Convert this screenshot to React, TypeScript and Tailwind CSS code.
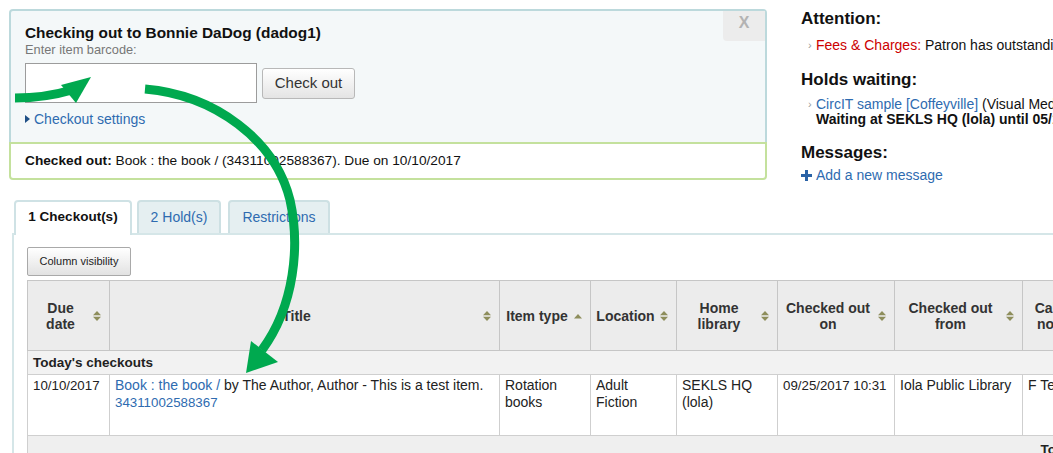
import React from "react";

function SortBoth() {
  return (
    <svg width="8" height="10" viewBox="0 0 8 10" className="shrink-0">
      <path d="M4 0 L8 4.2 H0 Z" fill="#8e8e5c" />
      <path d="M0 5.8 H8 L4 10 Z" fill="#8e8e5c" />
    </svg>
  );
}

function SortAsc() {
  return (
    <svg width="8" height="10" viewBox="0 0 8 10" className="shrink-0">
      <path d="M4 3 L8 7.5 H0 Z" fill="#8e8e5c" />
    </svg>
  );
}

function Th({ children, sort = "both" }: { children: React.ReactNode; sort?: "both" | "asc" }) {
  return (
    <th className="border border-[#c6c6c6] bg-[#ececec] pl-[4px] pr-[8px] align-middle text-[14px] font-bold leading-[16px] text-[#333]">
      <div className="flex items-center">
        <span className="flex-1 text-center">{children}</span>
        <span className="ml-[4px] flex">{sort === "both" ? <SortBoth /> : <SortAsc />}</span>
      </div>
    </th>
  );
}

function Td({ children, nowrap = false }: { children?: React.ReactNode; nowrap?: boolean }) {
  return (
    <td
      className={
        nowrap
          ? "whitespace-nowrap border border-[#cfcfcf] px-[5px] pt-[2px] align-top text-[14px] leading-[17px] text-[#222]"
          : "border border-[#cfcfcf] px-[5px] pt-[2px] align-top text-[14px] leading-[17px] text-[#222]"
      }
    >
      {children}
    </td>
  );
}

const LINK = "text-[#2e6bb0]";

export default function App() {
  return (
    <div className="relative h-[453px] w-[1053px] overflow-hidden bg-white font-['Liberation_Sans',Arial,sans-serif] text-[#222]">
      {/* top band */}
      <div className="flex h-[200px] items-start">
        {/* checkout panel */}
        <div className="ml-[9px] mt-[9px] w-[758px] shrink-0">
          <div className="relative rounded-t-[4px] border-2 border-b-0 border-[#bcd9dc] bg-[#f4f8f9] pb-[15px] pl-[14px] pt-[13px]">
            <div className="absolute right-0 top-0 flex h-[30px] w-[42px] justify-center rounded-bl-[4px] bg-[#ececec] pt-[4px] text-[16px] font-bold leading-[16px] text-[#b3b3b3]">
              X
            </div>
            <div className="text-[15.4px] font-bold leading-[17px] text-[#111]">
              Checking out to Bonnie DaDog (dadog1)
            </div>
            <div className="mt-[2px] text-[12.8px] leading-[14px] text-[#777]">Enter item barcode:</div>
            <div className="mt-[6px] flex items-center">
              <div className="h-[40px] w-[232px] border border-[#9c9c9c] bg-white" />
              <div className="ml-[5px] flex h-[31px] w-[93px] items-center justify-center rounded-[3px] border border-[#b8b8b8] bg-linear-to-b from-white to-[#e4e4e4] text-[15px] text-[#333]">
                Check out
              </div>
            </div>
            <div className={`mt-[8px] flex items-center text-[14px] leading-[16px] ${LINK}`}>
              <svg width="5" height="8" viewBox="0 0 5 8" className="mr-[4px]">
                <path d="M0 0 L5 4 L0 8 Z" fill="#1f4f86" />
              </svg>
              Checkout settings
            </div>
          </div>
          <div className="rounded-b-[4px] border-2 border-[#c4e19d] bg-white py-[9px] pl-[14px] text-[13.7px] leading-[16px] text-[#111]">
            <span className="font-bold">Checked out:</span> Book : the book / (34311002588367). Due on 10/10/2017
          </div>
        </div>

        {/* right column */}
        <div className="ml-[34px] mt-[9px] w-[400px] shrink-0 whitespace-nowrap text-[#111]">
          <div className="text-[17px] font-bold leading-[20px]">Attention:</div>
          <div className="ml-[7px] mt-[8px] flex items-center text-[14px] leading-[17px]">
            <span className="w-[8px] shrink-0 text-[11px] text-[#9a9a9a]">›</span>
            <span className="shrink-0 text-[#cc0000]">Fees &amp; Charges:</span>
            <span className="shrink-0">&nbsp;Patron has outstanding charges of 5.00.</span>
          </div>
          <div className="mt-[16px] text-[17px] font-bold leading-[20px]">Holds waiting:</div>
          <div className="ml-[7px] mt-[7px] text-[14px] leading-[15px]">
            <div className="flex items-center">
              <span className="w-[8px] shrink-0 text-[11px] text-[#9a9a9a]">›</span>
              <span className={`shrink-0 ${LINK}`}>CircIT sample [Coffeyville]</span>
              <span className="shrink-0">&nbsp;(Visual Media) Hold placed on 09/25/2017.</span>
            </div>
            <div className="ml-[8px] font-bold">Waiting at SEKLS HQ (lola) until 05/10/2017</div>
          </div>
          <div className="mt-[16px] text-[17px] font-bold leading-[20px]">Messages:</div>
          <div className={`mt-[4px] flex items-center text-[14px] leading-[17px] ${LINK}`}>
            <svg width="11" height="11" viewBox="0 0 11 11" className="mr-[4px]">
              <rect x="4" y="0" width="3" height="11" fill="#2a62a6" />
              <rect x="0" y="4" width="11" height="3" fill="#2a62a6" />
            </svg>
            Add a new message
          </div>
        </div>
      </div>

      {/* tabs */}
      <div className="ml-[12px] w-[1150px]">
        <div className="relative z-[1] -mb-[2px] flex h-[35px] items-start pl-[2px]">
          <div className="flex h-[35px] w-[118px] items-center justify-center rounded-t-[4px] border-2 border-b-0 border-[#cfe2e5] bg-white pb-[2px] text-[13.5px] font-bold text-[#111]">
            1 Checkout(s)
          </div>
          <div className={`ml-[5px] flex h-[33px] w-[84px] items-center justify-center rounded-t-[4px] border-2 border-b-0 border-[#cde0e3] bg-[#e5eff1] text-[14px] ${LINK}`}>
            2 Hold(s)
          </div>
          <div className={`ml-[7px] flex h-[33px] w-[102px] items-center justify-center rounded-t-[4px] border-2 border-b-0 border-[#cde0e3] bg-[#e5eff1] text-[14px] ${LINK}`}>
            Restrictions
          </div>
        </div>
        <div className="border-l-2 border-t-2 border-[#d5e6e8] pl-[13px] pt-[12px]">
          <div className="flex h-[29px] w-[104px] items-center justify-center rounded-[2px] border border-[#a9a9a9] bg-linear-to-b from-white to-[#e2e2e2] text-[11px] text-[#222]">
            Column visibility
          </div>
          <table className="mt-[4px] w-[1181px] table-fixed border-collapse">
            <colgroup>
              <col className="w-[82px]" />
              <col className="w-[390px]" />
              <col className="w-[91px]" />
              <col className="w-[86px]" />
              <col className="w-[101px]" />
              <col className="w-[117px]" />
              <col className="w-[128px]" />
              <col className="w-[66px]" />
              <col className="w-[120px]" />
            </colgroup>
            <thead>
              <tr className="h-[70px]">
                <Th>
                  Due
                  <br />
                  date
                </Th>
                <Th>Title</Th>
                <Th sort="asc">Item type</Th>
                <Th>Location</Th>
                <Th>
                  Home
                  <br />
                  library
                </Th>
                <Th>
                  Checked out
                  <br />
                  on
                </Th>
                <Th>
                  Checked out
                  <br />
                  from
                </Th>
                <Th>
                  Call
                  <br />
                  no.
                </Th>
                <Th>
                  Renew
                  <br />
                  all
                </Th>
              </tr>
            </thead>
            <tbody>
              <tr className="h-[24px]">
                <td
                  colSpan={9}
                  className="border border-[#cfcfcf] bg-[#f2f2f2] px-[5px] align-middle text-[13.5px] font-bold leading-[16px] text-[#222]"
                >
                  Today&apos;s checkouts
                </td>
              </tr>
              <tr className="h-[61px]">
                <Td nowrap>
                  <span className="text-[13.3px]">10/10/2017</span>
                </Td>
                <Td>
                  <span className={LINK}>Book : the book /</span> by The Author, Author - This is a test item.
                  <br />
                  <span className={`text-[13.3px] ${LINK}`}>34311002588367</span>
                </Td>
                <Td>
                  Rotation
                  <br />
                  books
                </Td>
                <Td>
                  Adult
                  <br />
                  Fiction
                </Td>
                <Td>
                  SEKLS HQ
                  <br />
                  (lola)
                </Td>
                <Td nowrap>
                  <span className="text-[13.3px]">09/25/2017 10:31</span>
                </Td>
                <Td nowrap>Iola Public Library</Td>
                <Td nowrap>F Test</Td>
                <Td>0 of 5</Td>
              </tr>
            </tbody>
            <tfoot>
              <tr className="h-[30px]">
                <td colSpan={7} className="border border-r-0 border-[#cfcfcf] bg-[#efefef]" />
                <td
                  colSpan={2}
                  className="border border-l-0 border-[#cfcfcf] bg-[#efefef] pl-[18px] align-middle text-[13.5px] font-bold text-[#222]"
                >
                  Totals:
                </td>
              </tr>
            </tfoot>
          </table>
        </div>
      </div>

      {/* green annotation arrows */}
      <svg
        className="pointer-events-none absolute left-0 top-0 z-10"
        width="1053"
        height="453"
        viewBox="0 0 1053 453"
      >
        <path d="M15 98 C35 98, 55 95, 72 90" stroke="#00a94f" strokeWidth="9" fill="none" />
        <path d="M91 77 L61 85 L76 103 Z" fill="#00a94f" />
        <path
          d="M145 89 C215 95, 275 140, 290 200 C300 245, 295 305, 262 350"
          stroke="#00a94f"
          strokeWidth="9"
          fill="none"
        />
        <path d="M246 373 L251 341 L278 362 Z" fill="#00a94f" />
      </svg>
    </div>
  );
}
